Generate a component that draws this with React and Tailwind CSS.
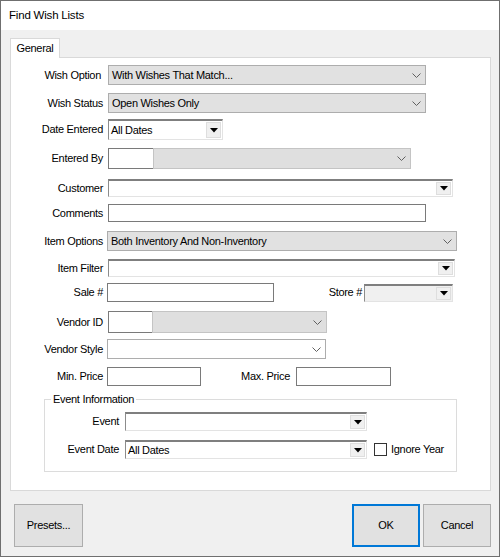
import React from "react";

function Tri() {
  return (
    <svg width="8" height="5" viewBox="0 0 8 5">
      <path d="M0 0H8L4 4.5Z" fill="#000" />
    </svg>
  );
}

function Chevron() {
  return (
    <svg width="9" height="5" viewBox="0 0 9 5">
      <path d="M0.5 0.5L4.5 4.5L8.5 0.5" stroke="#606060" strokeWidth="1" fill="none" />
    </svg>
  );
}

function ClassicCombo({ className, text, disabled }) {
  return (
    <div
      className={`flex items-stretch border-t-2 border-l border-b border-r border-t-[#7f7f7f] border-l-[#8c8c8c] border-b-[#e3e3e3] border-r-[#e3e3e3] ${
        disabled ? "bg-[#f0f0f0]" : "bg-white"
      } ${className}`}
    >
      <div className="flex-1 flex items-center pl-[2px] whitespace-nowrap overflow-hidden">{text}</div>
      <div className="w-[15px] my-[1px] mr-[1px] bg-[#f0f0f0] border border-[#dedede] flex items-center justify-center">
        <Tri />
      </div>
    </div>
  );
}

function ModernCombo({ className, text, white }) {
  return (
    <div
      className={`flex items-center border border-[#adadad] ${white ? "bg-white" : "bg-[#e1e1e1]"} ${className}`}
    >
      <div className="flex-1 pl-[3px] whitespace-nowrap overflow-hidden">{text}</div>
      <div className="mr-[4px] flex items-center">
        <Chevron />
      </div>
    </div>
  );
}

function TextBox({ className }) {
  return <div className={`bg-white border border-[#7a7a7a] ${className}`} />;
}

function Label({ children, className = "" }) {
  return (
    <div className={`w-[92px] text-right whitespace-nowrap ${className}`}>{children}</div>
  );
}

export default function App() {
  return (
    <div className="w-[500px] h-[557px] border border-[#6f6f6f] bg-[#f0f0f0] flex flex-col font-['Liberation_Sans',Arial,sans-serif] text-[11px] text-black tracking-[-0.3px] overflow-hidden">
      {/* Title bar */}
      <div className="h-[29px] bg-white flex items-center pl-[8px] text-[11.5px] tracking-[-0.2px]">
        Find Wish Lists
      </div>

      {/* Tab strip */}
      <div className="mt-[8px] ml-[9px] flex">
        <div className="relative z-10 w-[50px] h-[20px] -mb-px bg-white border border-b-0 border-[#d9d9d9] flex items-center justify-center">
          General
        </div>
      </div>

      {/* Panel */}
      <div className="ml-[9px] w-[481px] h-[434px] bg-white border border-[#d9d9d9] flex flex-col">
        {/* Wish Option */}
        <div className="mt-[7px] flex items-center h-[20px]">
          <Label className="pr-[2px]">Wish Option</Label>
          <ModernCombo className="ml-[5px] w-[318px] h-[20px]" text="With Wishes That Match..." />
        </div>
        {/* Wish Status */}
        <div className="mt-[8px] flex items-center h-[20px]">
          <Label>Wish Status</Label>
          <ModernCombo className="ml-[5px] w-[318px] h-[20px]" text="Open Wishes Only" />
        </div>
        {/* Date Entered */}
        <div className="mt-[6px] flex items-center h-[21px]">
          <Label>Date Entered</Label>
          <ClassicCombo className="ml-[5px] w-[115px] h-[21px]" text="All Dates" />
        </div>
        {/* Entered By */}
        <div className="mt-[8px] flex items-center h-[21px]">
          <Label>Entered By</Label>
          <TextBox className="ml-[5px] w-[46px] h-[21px]" />
          <div className="-ml-px w-[258px] h-[21px] bg-[#dfdfdf] border border-[#c4c4c4] flex items-center justify-end pr-[4px]">
            <Chevron />
          </div>
        </div>
        {/* Customer */}
        <div className="mt-[10px] flex items-center h-[18px]">
          <Label>Customer</Label>
          <ClassicCombo className="ml-[5px] w-[345px] h-[18px]" text="" />
        </div>
        {/* Comments */}
        <div className="mt-[7px] flex items-center h-[18px]">
          <Label>Comments</Label>
          <TextBox className="ml-[5px] w-[318px] h-[18px]" />
        </div>
        {/* Item Options */}
        <div className="mt-[9px] flex items-center h-[20px]">
          <Label>Item Options</Label>
          <ModernCombo className="ml-[4px] w-[350px] h-[20px]" text="Both Inventory And Non-Inventory" />
        </div>
        {/* Item Filter */}
        <div className="mt-[8px] flex items-center h-[18px]">
          <Label>Item Filter</Label>
          <ClassicCombo className="ml-[5px] w-[347px] h-[18px]" text="" />
        </div>
        {/* Sale # / Store # */}
        <div className="mt-[6px] flex items-center h-[19px]">
          <Label>Sale #</Label>
          <TextBox className="ml-[4px] w-[167px] h-[19px]" />
          <div className="w-[88px] text-right">Store #</div>
          <ClassicCombo className="ml-[2px] w-[89px] h-[18px]" text="" disabled />
        </div>
        {/* Vendor ID */}
        <div className="mt-[9px] flex items-center h-[22px]">
          <Label>Vendor ID</Label>
          <TextBox className="ml-[5px] w-[45px] h-[22px]" />
          <div className="-ml-px w-[175px] h-[22px] bg-[#dfdfdf] border border-[#c4c4c4] flex items-center justify-end pr-[4px]">
            <Chevron />
          </div>
        </div>
        {/* Vendor Style */}
        <div className="mt-[6px] flex items-center h-[20px]">
          <Label>Vendor Style</Label>
          <ModernCombo className="ml-[4px] w-[219px] h-[20px]" text="" white />
        </div>
        {/* Min / Max price */}
        <div className="mt-[8px] flex items-center h-[19px]">
          <Label>Min. Price</Label>
          <TextBox className="ml-[4px] w-[94px] h-[19px]" />
          <div className="w-[89px] text-right">Max. Price</div>
          <TextBox className="ml-[6px] w-[95px] h-[19px]" />
        </div>

        {/* Event Information group */}
        <div className="relative mt-[13px] ml-[33px] w-[413px] h-[73px] border border-[#dcdcdc] flex flex-col">
          <div className="absolute left-[6px] -top-[8px] bg-white px-[2px] leading-[14px]">
            Event Information
          </div>
          <div className="mt-[12px] flex items-center h-[19px]">
            <div className="w-[74px] text-right">Event</div>
            <ClassicCombo className="ml-[6px] w-[242px] h-[19px]" text="" />
          </div>
          <div className="mt-[9px] flex items-center h-[19px]">
            <div className="w-[74px] text-right">Event Date</div>
            <ClassicCombo className="ml-[6px] w-[242px] h-[19px]" text="All Dates" />
            <div className="ml-[7px] w-[13px] h-[13px] border border-[#333] bg-white" />
            <div className="ml-[4px]">Ignore Year</div>
          </div>
        </div>
      </div>

      {/* Buttons */}
      <div className="mt-[13px] flex items-start justify-between">
        <div className="ml-[13px] w-[69px] h-[43px] bg-[#e1e1e1] border border-[#adadad] flex items-center justify-center">
          Presets...
        </div>
        <div className="mr-[8px] flex gap-[3px]">
          <div className="w-[68px] h-[43px] bg-[#e1e1e1] border-2 border-[#0078d7] flex items-center justify-center">
            OK
          </div>
          <div className="w-[68px] h-[43px] bg-[#e1e1e1] border border-[#adadad] flex items-center justify-center">
            Cancel
          </div>
        </div>
      </div>
    </div>
  );
}
